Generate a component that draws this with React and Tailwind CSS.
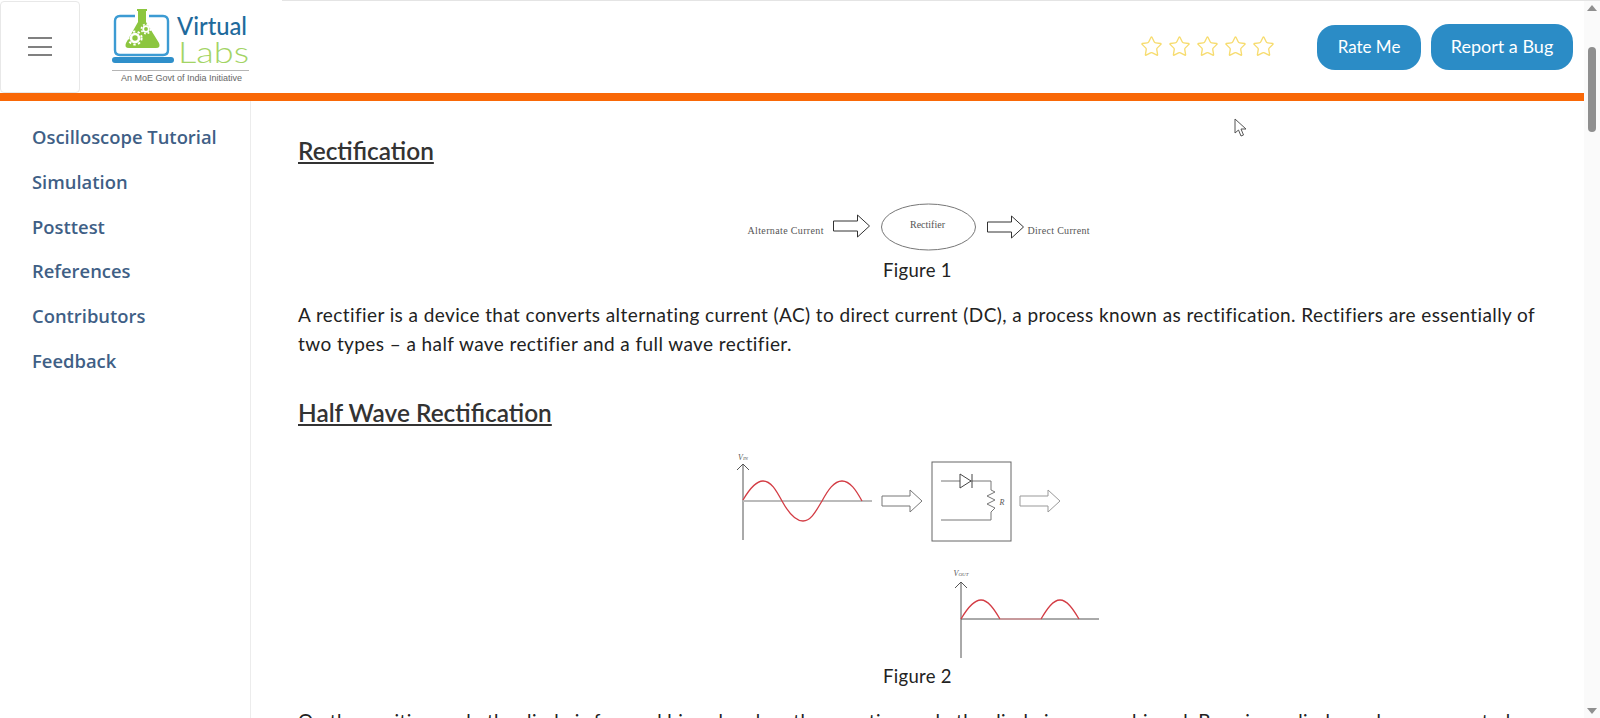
import { Star } from 'lucide-react';

const navItems = ['Oscilloscope Tutorial', 'Simulation', 'Posttest', 'References', 'Contributors', 'Feedback'];

function Logo() {
  return (
    <svg width="144" height="84" viewBox="0 0 144 84" className="block">
      <path d="M24 9 H9 Q4 9 4 14 V43 Q4 48 9 48 H52 Q57 48 57 43 V14 Q57 9 52 9 H38" fill="none" stroke="#3c9bd3" strokeWidth="2.4" />
      <rect x="1" y="50" width="62" height="6" rx="3" fill="#2f8fca" />
      <path d="M26 2 H36 V4 H35 V15 L48 36 Q50 41 45 41 H18 Q13 41 15 36 L27 15 V4 H26 Z" fill="#8cc63f" />
      <circle cx="24" cy="31" r="4" fill="none" stroke="#fff" strokeWidth="2.6" />
      <circle cx="24" cy="31" r="6.6" fill="none" stroke="#fff" strokeWidth="2" strokeDasharray="2.4 2.4" />
      <circle cx="35" cy="22" r="2.8" fill="none" stroke="#fff" strokeWidth="1.8" />
      <circle cx="35" cy="22" r="4.6" fill="none" stroke="#fff" strokeWidth="1.6" strokeDasharray="1.8 1.8" />
      <text x="66" y="28" fontFamily="Lato, sans-serif" fontSize="25" fontWeight="500" fill="#1f6a9c" textLength="70" lengthAdjust="spacingAndGlyphs">Virtual</text>
      <text x="67" y="56" fontFamily="Lato, sans-serif" fontSize="30" fontWeight="300" fill="#a3d465" textLength="71" lengthAdjust="spacingAndGlyphs">Labs</text>
      <rect x="1" y="63" width="137" height="1" fill="#b5b5b5" />
      <text x="10" y="74" fontFamily="Liberation Sans, sans-serif" fontSize="9" fill="#666" textLength="121">An MoE Govt of India Initiative</text>
    </svg>
  );
}

function Arrow({ x, w, y, color = '#333' }) {
  // outlined block arrow, y is the centre line
  const head = x + w - 12;
  return (
    <path
      d={`M${x} ${y - 5} H${head} V${y - 11} L${x + w} ${y} L${head} ${y + 11} V${y + 5} H${x} Z`}
      fill="none"
      stroke={color}
      strokeWidth="1"
    />
  );
}

function FigureOne() {
  return (
    <svg width="344" height="50" viewBox="745.5 202 344 50" className="block mx-auto">
      <g fontFamily="Liberation Serif, serif" fill="#555" fontSize="10">
        <text x="747" y="234" textLength="76">Alternate Current</text>
        <text x="927" y="228" textAnchor="middle">Rectifier</text>
        <text x="1027" y="234" textLength="62">Direct Current</text>
      </g>
      <Arrow x={833} w={36} y={226} />
      <ellipse cx="928" cy="227" rx="47" ry="23" fill="none" stroke="#777" strokeWidth="1" />
      <Arrow x={987} w={36} y={227} />
    </svg>
  );
}

function FigureTwo() {
  return (
    <svg width="380" height="216" viewBox="728 446 380 216" className="block mx-auto">
      <g fontFamily="Liberation Serif, serif" fontStyle="italic" fill="#555">
        <text x="743" y="460" fontSize="8" textAnchor="middle">V<tspan fontSize="5">IN</tspan></text>
        <text x="1002" y="505" fontSize="8" textAnchor="middle">R</text>
        <text x="961" y="576" fontSize="8" textAnchor="middle">V<tspan fontSize="5">OUT</tspan></text>
      </g>
      <path d="M743 540 V464 M737 470 L743 464 L749 470" fill="none" stroke="#555" strokeWidth="1" />
      <path d="M743 501 H872" stroke="#bbb" strokeWidth="2" />
      <path d="M743 500 C750 488 756 481 763 481 C771 481 776 490 782 501 C788 512 795 521 803 521 C811 521 816 511 822 501 C828 490 834 481 842 481 C850 481 856 490 862 501" fill="none" stroke="#d33c44" strokeWidth="1.3" />
      <Arrow x={882} w={40} y={501} color="#777" />
      <rect x="932" y="462" width="79" height="79" fill="none" stroke="#666" strokeWidth="1" />
      <path d="M941 481 H991 V490 L995 492 L987 496 L995 500 L987 504 L995 508 L991 512 V520 H941" fill="none" stroke="#777" strokeWidth="1" />
      <path d="M960 474 L971 481 L960 488 Z M972 474 V488" fill="#fff" stroke="#444" strokeWidth="1" />
      <Arrow x={1020} w={40} y={501} color="#999" />
      <path d="M961 658 V582 M955 588 L961 582 L967 588 M961 619 H1099" fill="none" stroke="#555" strokeWidth="1" />
      <path d="M961 619 C968 607 974 600 981 600 C988 600 994 609 1000 619 M1041 619 C1047 609 1053 600 1060 600 C1067 600 1073 609 1079 619" fill="none" stroke="#d33c44" strokeWidth="1.3" />
      <path d="M1000 619 H1041" stroke="#e58a8e" strokeWidth="1" />
    </svg>
  );
}

export default function App() {
  return (
    <div className="relative flex h-[718px] overflow-hidden bg-white">
      <div className="flex-1 min-w-0 flex flex-col">
        <header className="flex items-center h-[93px]">
          <button className="flex flex-col gap-[6.5px] items-center justify-center w-[80px] h-[92px] bg-white border border-[#e8e8e8] rounded-[4px]">
            <span className="block w-[24px] h-[2px] bg-[#808080]" />
            <span className="block w-[24px] h-[2px] bg-[#808080]" />
            <span className="block w-[24px] h-[2px] bg-[#808080]" />
          </button>
          <div className="ml-[31px] mt-[4px]">
            <Logo />
          </div>
          <div className="ml-auto flex items-center gap-[5px] mr-[42px]">
            {[0, 1, 2, 3, 4].map((i) => (
              <Star key={i} size={23} strokeWidth={1.4} className="text-[#f7dc6f]" />
            ))}
          </div>
          <button className="w-[104px] h-[45px] mr-[10px] mt-[1px] rounded-[18px] bg-[#2b8cc6] text-white text-[17px] font-['Lato',sans-serif]">Rate Me</button>
          <button className="w-[142px] h-[46px] mr-[11px] rounded-[18px] bg-[#2b8cc6] text-white text-[18px] font-['Lato',sans-serif]">Report a Bug</button>
        </header>
        <div className="h-[8px] bg-[#f96807]" />
        <div className="flex flex-1 min-h-0">
          <nav className="w-[251px] shrink-0 border-r border-[#ececec] pl-[32px] pt-[14px] font-['Open_Sans',sans-serif] font-semibold text-[18.4px] text-[#3f5f86]">
            {navItems.map((item) => (
              <div key={item} className="h-[44.8px] leading-[44px]">{item}</div>
            ))}
          </nav>
          <main className="flex-1 min-w-0 px-[47px] font-['Lato',sans-serif] text-[#222]">
            <h1 className="mt-[31px] text-[24.4px] leading-[38px] font-semibold text-[#333] underline">Rectification</h1>
            <div className="mt-[32px]">
              <FigureOne />
            </div>
            <p className="mt-[4px] text-center text-[18.5px] tracking-[0.3px] leading-[28px]">Figure 1</p>
            <p className="mt-[16px] text-[19px] tracking-[0.41px] leading-[29px]">
              A rectifier is a device that converts alternating current (AC) to direct current (DC), a process known as rectification. Rectifiers are essentially of two types – a half wave rectifier and a full wave rectifier.
            </p>
            <h1 className="mt-[36px] text-[24.4px] leading-[38px] font-semibold text-[#333] underline">Half Wave Rectification</h1>
            <div className="mt-[14px]">
              <FigureTwo />
            </div>
            <p className="text-center text-[18.5px] tracking-[0.3px] leading-[28px]">Figure 2</p>
            <p className="mt-[16px] text-[19px] tracking-[0.41px] leading-[29px]">
              On the positive cycle the diode is forward biased and on the negative cycle the diode is reverse biased. By using a diode we have converted an AC source into a pulsating DC source.
            </p>
          </main>
        </div>
      </div>
      <div className="w-[16px] shrink-0 bg-[#fafafa] flex flex-col items-center">
        <span className="mt-[5px] w-0 h-0 border-l-[5px] border-r-[5px] border-b-[6px] border-l-transparent border-r-transparent border-b-[#8f8f8f]" />
        <span className="mt-[36px] w-[8px] h-[85px] rounded-full bg-[#8f8f8f]" />
        <span className="mt-auto mb-[4px] w-0 h-0 border-l-[5px] border-r-[5px] border-t-[6px] border-l-transparent border-r-transparent border-t-[#8f8f8f]" />
      </div>
      <span className="absolute left-[282px] right-0 top-0 h-px bg-[#e4e4e4]" />
      <svg width="14" height="20" viewBox="0 0 14 20" className="absolute left-[1234px] top-[118px]">
        <path d="M1 1 V15 L4.5 12 L7 18 L9.5 17 L7 11 H12 Z" fill="#fff" stroke="#555" strokeWidth="1" />
      </svg>
    </div>
  );
}
